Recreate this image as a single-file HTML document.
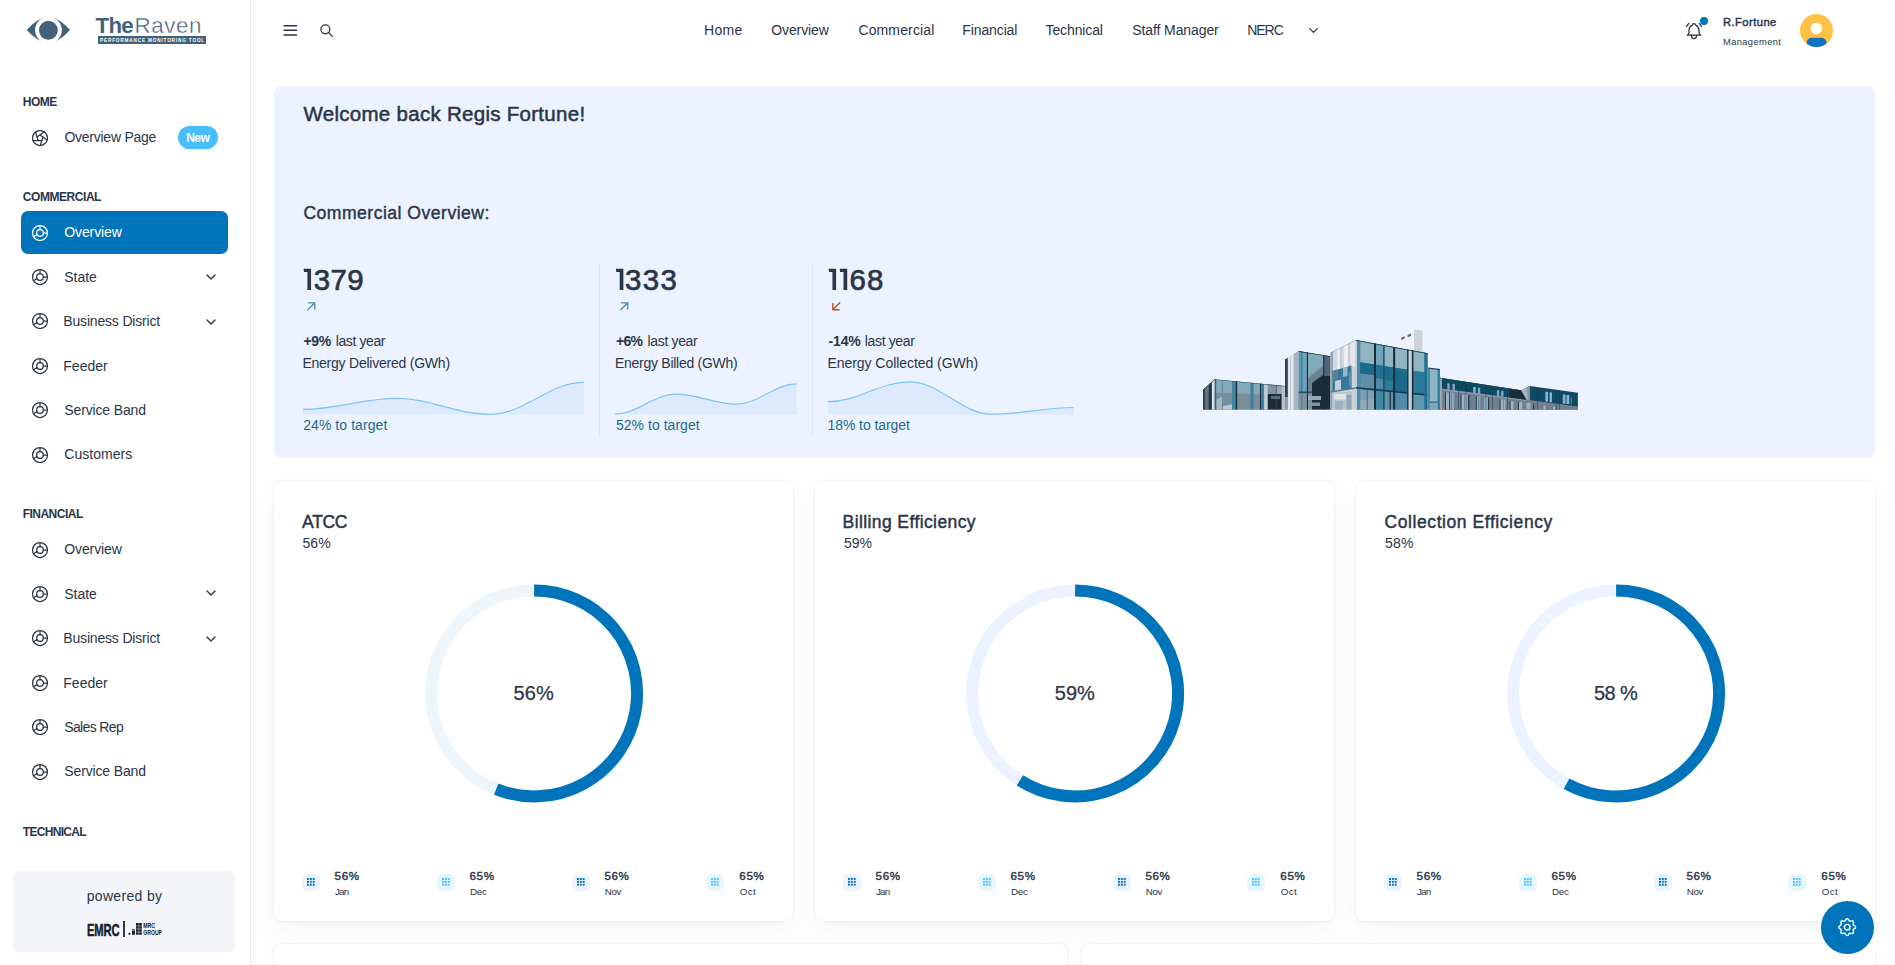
<!DOCTYPE html>
<html lang="en">
<head>
<meta charset="utf-8">
<title>The Raven - Commercial Overview</title>
<style>
*{box-sizing:border-box;margin:0;padding:0}
html,body{width:1895px;height:965px;overflow:hidden;background:#fff}
body{font-family:"Liberation Sans",sans-serif;color:#2a3547;font-size:14px;position:relative}
.abs{position:absolute}
.t{position:absolute;white-space:nowrap;line-height:1;color:#2a3547}
svg{position:absolute;overflow:visible}
#side{position:absolute;left:0;top:0;width:251px;height:965px;background:#fff;border-right:1px solid #e5eaef}
#active{position:absolute;left:21px;top:211px;width:207px;height:43px;border-radius:7px;background:#0074ba}
#banner{position:absolute;left:274px;top:86px;width:1601px;height:372px;border-radius:7px;background:#ecf2ff}
.vdiv{position:absolute;width:1px;background:#e0e6f0;top:262px;height:174px}
.card{position:absolute;background:#fff;border-radius:7px;box-shadow:0 0 2px rgba(145,158,171,.3),0 12px 24px -4px rgba(145,158,171,.12)}
.lg{position:absolute;width:18px;height:17px;border-radius:5px;background:#ecf2ff}
.lg2{background:#e8f7ff}
</style>
</head>
<body>
<svg width="0" height="0"><defs>
<symbol id="i-donut" viewBox="0 0 24 24"><g fill="none" stroke="currentColor" stroke-width="1.5" stroke-linecap="round" stroke-linejoin="round"><path d="M12 3v5m4 4h5m-12.5 2l-4.5 2.5"/><circle cx="12" cy="12" r="4"/><circle cx="12" cy="12" r="9"/></g></symbol>
<symbol id="i-aperture" viewBox="0 0 24 24"><g fill="none" stroke="currentColor" stroke-width="1.5" stroke-linecap="round" stroke-linejoin="round"><circle cx="12" cy="12" r="9"/><path d="M3.6 15h10.55"/><path d="M6.551 4.938l3.26 10.034"/><path d="M17.032 4.636l-8.535 6.201"/><path d="M20.559 14.51l-8.535 -6.201"/><path d="M12.257 20.916l3.261 -10.034"/></g></symbol>
<symbol id="i-chev" viewBox="0 0 24 24"><path d="M6 9l6 6l6 -6" fill="none" stroke="currentColor" stroke-width="2" stroke-linecap="round" stroke-linejoin="round"/></symbol>
<symbol id="i-menu" viewBox="0 0 24 24"><path d="M4 6h16M4 12h16M4 18h16" fill="none" stroke="currentColor" stroke-width="2" stroke-linecap="round"/></symbol>
<symbol id="i-search" viewBox="0 0 24 24"><g fill="none" stroke="currentColor" stroke-width="2" stroke-linecap="round" stroke-linejoin="round"><circle cx="10" cy="10" r="7"/><path d="M21 21l-6 -6"/></g></symbol>
<symbol id="i-bell" viewBox="0 0 24 24"><g fill="none" stroke="currentColor" stroke-width="1.5" stroke-linecap="round" stroke-linejoin="round"><path d="M10 5a2 2 0 0 1 4 0a7 7 0 0 1 4 6v3a4 4 0 0 0 2 3h-16a4 4 0 0 0 2 -3v-3a7 7 0 0 1 4 -6"/><path d="M9 17v1a3 3 0 0 0 6 0v-1"/><path d="M21 6.727a11.05 11.05 0 0 0 -2.794 -3.727"/><path d="M3 6.727a11.05 11.05 0 0 1 2.792 -3.727"/></g></symbol>
<symbol id="i-aur" viewBox="0 0 24 24"><path d="M17 7l-10 10M8 7h9v9" fill="none" stroke="currentColor" stroke-width="2" stroke-linecap="round" stroke-linejoin="round"/></symbol>
<symbol id="i-adl" viewBox="0 0 24 24"><path d="M17 7l-10 10M16 17h-9v-9" fill="none" stroke="currentColor" stroke-width="2" stroke-linecap="round" stroke-linejoin="round"/></symbol>
<symbol id="i-grid" viewBox="0 0 9 9"><g fill="currentColor"><rect x="0" y="0" width="2.1" height="2.1"/><rect x="3.1" y="0" width="2.1" height="2.1"/><rect x="6.2" y="0" width="2.1" height="2.1"/><rect x="0" y="3.1" width="2.1" height="2.1"/><rect x="3.1" y="3.1" width="2.1" height="2.1"/><rect x="6.2" y="3.1" width="2.1" height="2.1"/><rect x="0" y="6.2" width="2.1" height="2.1"/><rect x="3.1" y="6.2" width="2.1" height="2.1"/><rect x="6.2" y="6.2" width="2.1" height="2.1"/></g></symbol>
<symbol id="i-gear" viewBox="0 0 24 24"><g fill="none" stroke="currentColor" stroke-width="1.5" stroke-linecap="round" stroke-linejoin="round"><path d="M10.325 4.317c.426 -1.756 2.924 -1.756 3.35 0a1.724 1.724 0 0 0 2.573 1.066c1.543 -.94 3.31 .826 2.37 2.37a1.724 1.724 0 0 0 1.065 2.572c1.756 .426 1.756 2.924 0 3.35a1.724 1.724 0 0 0 -1.066 2.573c.94 1.543 -.826 3.31 -2.37 2.37a1.724 1.724 0 0 0 -2.572 1.065c-.426 1.756 -2.924 1.756 -3.35 0a1.724 1.724 0 0 0 -2.573 -1.066c-1.543 .94 -3.31 -.826 -2.37 -2.37a1.724 1.724 0 0 0 -1.065 -2.572c-1.756 -.426 -1.756 -2.924 0 -3.35a1.724 1.724 0 0 0 1.066 -2.573c-.94 -1.543 .826 -3.31 2.37 -2.37c1 .608 2.296 .07 2.572 -1.065z"/><path d="M9 12a3 3 0 1 0 6 0a3 3 0 0 0 -6 0"/></g></symbol>
</defs></svg>
<div id="side"></div>
<svg style="left:0;top:0" width="251" height="60" viewBox="0 0 251 60"><path d="M27.05 29.9Q48.4 5.4 69.7 29.9Q48.4 54.4 27.05 29.9Z" fill="#44617a" stroke="#44617a" stroke-width=".6" stroke-linejoin="round"/><circle cx="48.45" cy="30.1" r="13.35" fill="#fff"/><ellipse cx="48.4" cy="30.3" rx="9.35" ry="9.45" fill="#44617a"/></svg>
<div class="t" style="left:95.6px;top:15px;font-size:22.3px;color:#44617a"><b style="letter-spacing:-.75px">The</b><span style="letter-spacing:.62px;margin-left:1.5px;-webkit-text-stroke:.4px #fff">Raven</span></div>
<div class="abs" style="left:98px;top:36px;width:108px;height:8.2px;background:#44617a"></div>
<div class="t" style="left:100px;top:38.5px;font-size:4.7px;font-weight:700;color:#fff;letter-spacing:.83px;transform:scaleX(1.0);transform-origin:0 0">PERFORMANCE MONITORING TOOL</div>
<svg style="left:29.90px;top:127.90px;color:#2a3547" width="20" height="20"><use href="#i-aperture"/></svg>
<div class="abs" style="left:178px;top:126.2px;width:40px;height:22.5px;border-radius:12px;background:#49beff"></div>
<div id="active"></div>
<svg style="left:29.80px;top:222.60px;color:#fff" width="20" height="20"><use href="#i-donut"/></svg>
<svg style="left:29.80px;top:266.70px;color:#2a3547" width="20" height="20"><use href="#i-donut"/></svg>
<svg style="left:29.80px;top:310.70px;color:#2a3547" width="20" height="20"><use href="#i-donut"/></svg>
<svg style="left:29.80px;top:355.70px;color:#2a3547" width="20" height="20"><use href="#i-donut"/></svg>
<svg style="left:29.80px;top:399.80px;color:#2a3547" width="20" height="20"><use href="#i-donut"/></svg>
<svg style="left:29.80px;top:444.80px;color:#2a3547" width="20" height="20"><use href="#i-donut"/></svg>
<svg style="left:202.50px;top:268.60px;color:#2a3547" width="16" height="16"><use href="#i-chev"/></svg>
<svg style="left:202.50px;top:313.60px;color:#2a3547" width="16" height="16"><use href="#i-chev"/></svg>
<svg style="left:29.80px;top:539.70px;color:#2a3547" width="20" height="20"><use href="#i-donut"/></svg>
<svg style="left:29.80px;top:583.70px;color:#2a3547" width="20" height="20"><use href="#i-donut"/></svg>
<svg style="left:29.80px;top:627.60px;color:#2a3547" width="20" height="20"><use href="#i-donut"/></svg>
<svg style="left:29.80px;top:672.50px;color:#2a3547" width="20" height="20"><use href="#i-donut"/></svg>
<svg style="left:29.80px;top:716.60px;color:#2a3547" width="20" height="20"><use href="#i-donut"/></svg>
<svg style="left:29.80px;top:761.50px;color:#2a3547" width="20" height="20"><use href="#i-donut"/></svg>
<svg style="left:202.60px;top:585.40px;color:#2a3547" width="16" height="16"><use href="#i-chev"/></svg>
<svg style="left:202.60px;top:630.50px;color:#2a3547" width="16" height="16"><use href="#i-chev"/></svg>
<div class="abs" style="left:13px;top:871px;width:222px;height:80.5px;border-radius:7px;background:#f3f5f8"></div>
<div class="t" style="left:87px;top:922.3px;font-size:16.2px;font-weight:700;color:#14202b;-webkit-text-stroke:.5px #14202b;transform:scaleX(.69);transform-origin:0 0;letter-spacing:-.2px">EMRC</div>
<div class="abs" style="left:123px;top:921px;width:2px;height:15.6px;background:#2a3a48"></div>
<svg style="left:128px;top:921px" width="36" height="16" viewBox="128 921 36 16"><g fill="#14202b"><rect x="128.5" y="932.8" width="1.9" height="1.9"/><rect x="132" y="931" width="3" height="3.7"/><rect x="132" y="929.2" width="3" height="1.4" opacity=".85"/><rect x="136" y="923" width="5.8" height="11.7"/></g><g stroke="#f3f5f8" stroke-width=".45"><path d="M136 926h5.8M136 929h5.8M136 932h5.8M138.9 923v11.7"/></g><text x="143.3" y="928.4" font-family="Liberation Sans" font-weight="700" font-size="6.6" fill="#14202b" textLength="11.7" lengthAdjust="spacingAndGlyphs">MRC</text><text x="143.3" y="935" font-family="Liberation Sans" font-weight="700" font-size="6.6" fill="#14202b" textLength="18.7" lengthAdjust="spacingAndGlyphs">GROUP</text></svg>
<svg style="left:280.85px;top:20.95px;color:#2a3547" width="18.7" height="18.7"><use href="#i-menu"/></svg>
<svg style="left:318.85px;top:22.95px;color:#2a3547" width="15.3" height="15.3"><use href="#i-search"/></svg>
<svg style="left:1305.50px;top:22.90px;color:#2a3547" width="15" height="15"><use href="#i-chev"/></svg>
<svg style="left:1684.00px;top:20.60px;color:#2a3547" width="20" height="20"><use href="#i-bell"/></svg>
<div class="abs" style="left:1699.8px;top:16.8px;width:8.2px;height:8.2px;border-radius:50%;background:#0074ba"></div>
<svg style="left:1800px;top:14px" width="33" height="33" viewBox="0 0 33 33"><defs><clipPath id="avc"><circle cx="16.5" cy="16.5" r="16.5"/></clipPath></defs><circle cx="16.5" cy="16.5" r="16.5" fill="#ffc145"/><circle cx="16.4" cy="14.4" r="5.75" fill="#fff"/><path d="M6.7 33V29.2Q6.7 23.7 12.2 23.7H20.9Q26.4 23.7 26.4 29.2V33Z" fill="#0d74c4" clip-path="url(#avc)"/></svg>
<div id="banner"></div>
<div class="vdiv" style="left:599px"></div><div class="vdiv" style="left:812px"></div>
<svg style="left:303.25px;top:298.00px;color:#4b90b8" width="16.6" height="16.6"><use href="#i-aur"/></svg>
<svg style="left:615.60px;top:298.00px;color:#4b90b8" width="16.6" height="16.6"><use href="#i-aur"/></svg>
<svg style="left:828.10px;top:298.00px;color:#b5532a" width="16.6" height="16.6"><use href="#i-adl"/></svg>
<svg style="left:0;top:0" width="1895" height="965" viewBox="0 0 1895 965"><path d="M303.2 409.3C337.8 409.3 362.1 398.3 396.7 398.3C431.3 398.3 455.6 414.3 490.2 414.3C524.8 414.3 549.1 382.3 583.7 382.3L583.7 414.6L303.2 414.6Z" fill="#ddeafe"/><path d="M303.2 409.3C337.8 409.3 362.1 398.3 396.7 398.3C431.3 398.3 455.6 414.3 490.2 414.3C524.8 414.3 549.1 382.3 583.7 382.3" fill="none" stroke="#7cc5f7" stroke-width="1.2"/><path d="M615.1 414.2C637.5 414.2 653.2 394.1 675.6 394.1C698.0 394.1 713.8 404.2 736.2 404.2C758.6 404.2 774.3 383.9 796.7 383.9L796.7 414.6L615.1 414.6Z" fill="#ddeafe"/><path d="M615.1 414.2C637.5 414.2 653.2 394.1 675.6 394.1C698.0 394.1 713.8 404.2 736.2 404.2C758.6 404.2 774.3 383.9 796.7 383.9" fill="none" stroke="#7cc5f7" stroke-width="1.2"/><path d="M827.9 401.7C858.2 401.7 879.5 381.9 909.8 381.9C940.1 381.9 961.4 414.2 991.7 414.2C1022.0 414.2 1043.3 407.5 1073.6 407.5L1073.6 414.6L827.9 414.6Z" fill="#ddeafe"/><path d="M827.9 401.7C858.2 401.7 879.5 381.9 909.8 381.9C940.1 381.9 961.4 414.2 991.7 414.2C1022.0 414.2 1043.3 407.5 1073.6 407.5" fill="none" stroke="#7cc5f7" stroke-width="1.2"/><path d="M303.60 268.86H311.05V290.05H307.40V271.9H303.95Z" fill="#2a3547"/><path d="M615.90 268.86H623.35V290.05H619.70V271.9H616.25Z" fill="#2a3547"/><path d="M828.65 268.86H836.10V290.05H832.45V271.9H829.00Z" fill="#2a3547"/><path d="M839.75 268.86H847.20V290.05H843.55V271.9H840.10Z" fill="#2a3547"/><g shape-rendering="auto"><defs><clipPath id="cL"><polygon points="1203,409.7 1203,389.7 1214.5,379.3 1285,386 1285,409.7"/></clipPath><clipPath id="cM2"><polygon points="1298.4,409.7 1298.4,351.1 1332.2,356.4 1332.2,409.7"/></clipPath><clipPath id="cT1"><polygon points="1330.3,409.7 1330.3,352.7 1355.9,340 1355.9,409.7"/></clipPath><clipPath id="cT2"><polygon points="1355.9,409.7 1355.9,340 1427.7,353.2 1427.7,409.7"/></clipPath><clipPath id="cR"><polygon points="1440,377.8 1521.1,390.2 1529.6,386 1577.9,392.8 1577.9,409.7 1440,409.7"/></clipPath></defs><g clip-path="url(#cL)"><rect x="1203.0" y="375.0" width="82.0" height="34.7" fill="#86a9b9"/><polygon points="1203.0,392.0 1285.0,395.5 1285.0,409.7 1203.0,409.7" fill="#7a8d9b"/><rect x="1203.0" y="375.0" width="2.2" height="34.7" fill="#2b3f50"/><rect x="1205.2" y="375.0" width="3.5" height="34.7" fill="#5d7384"/><rect x="1208.7" y="375.0" width="3.2" height="34.7" fill="#1f3040"/><rect x="1211.9" y="375.0" width="2.8" height="34.7" fill="#dde1e6"/><rect x="1214.7" y="375.0" width="1.5" height="34.7" fill="#1d6f8f"/><rect x="1232.0" y="375.0" width="3.6" height="34.7" fill="#3f86a3"/><rect x="1235.6" y="375.0" width="1.6" height="34.7" fill="#1f3040"/><rect x="1250.4" y="375.0" width="3.2" height="34.7" fill="#3b82a0"/><rect x="1259.9" y="375.0" width="1.6" height="34.7" fill="#1f3040"/><rect x="1261.5" y="375.0" width="2.6" height="34.7" fill="#3b82a0"/><rect x="1264.1" y="375.0" width="3.7" height="34.7" fill="#c5ccd4"/><rect x="1281.5" y="375.0" width="3.5" height="34.7" fill="#b8c1ca"/><rect x="1222.0" y="375.0" width="0.9" height="34.7" fill="#5f8da2"/><rect x="1267.8" y="375.0" width="8.5" height="19.0" fill="#8394a3"/><rect x="1267.8" y="394.0" width="13.7" height="15.7" fill="#1c2b38"/><rect x="1276.3" y="375.0" width="5.2" height="19.0" fill="#97a5b0"/><rect x="1275.8" y="375.0" width="0.8" height="34.7" fill="#3a4a58"/><rect x="1271.0" y="396.0" width="9.0" height="3.0" fill="#5a6b7a"/><polygon points="1216.5,400.0 1222.0,396.5 1222.0,409.7 1216.5,409.7" fill="#a8b6c0"/><polygon points="1223.0,406.0 1232.0,404.5 1232.0,409.7 1223.0,409.7" fill="#b9c9d2"/><path d="M1203 389.7L1214.5 379.3L1285 386" fill="none" stroke="#24465a" stroke-width="1.1"/></g><polygon points="1285.0,409.7 1285.0,359.5 1298.4,351.1 1298.4,409.7" fill="#cdd3da"/><polygon points="1285.0,397.0 1285.0,359.5 1287.9,357.7 1287.9,397.0" fill="#2f4050"/><polygon points="1287.9,409.7 1287.9,357.7 1293.7,354.0 1293.7,409.7" fill="#e4e7eb"/><polygon points="1293.7,409.7 1293.7,354.0 1298.4,351.1 1298.4,409.7" fill="#a9b4be"/><rect x="1285.0" y="397.0" width="2.9" height="12.7" fill="#8f9ca8"/><rect x="1290.3" y="356.0" width="0.7" height="53.7" fill="#b4bdc6"/><g clip-path="url(#cM2)"><rect x="1298.4" y="350.0" width="33.8" height="59.7" fill="#83aaba"/><rect x="1298.4" y="350.0" width="8.5" height="59.7" fill="#5a97b0"/><rect x="1303.0" y="350.0" width="3.9" height="43.0" fill="#6fa3b8"/><polygon points="1308.0,378.0 1323.0,366.0 1323.0,392.0 1308.0,392.0" fill="#6c8293"/><polygon points="1312.0,383.0 1323.0,375.0 1332.2,375.0 1332.2,409.7 1312.0,409.7" fill="#1c2b38"/><rect x="1323.2" y="356.0" width="9.0" height="20.0" fill="#4d6577"/><rect x="1298.4" y="393.0" width="13.6" height="16.7" fill="#7c93a2"/><rect x="1308.0" y="396.0" width="13.0" height="4.0" fill="#9aa8b4"/><rect x="1308.0" y="402.5" width="12.0" height="3.5" fill="#8695a2"/><rect x="1298.4" y="391.5" width="13.6" height="1.7" fill="#27506a"/><rect x="1306.9" y="350.0" width="1.1" height="59.7" fill="#1c2b38"/><rect x="1323.2" y="350.0" width="1.1" height="59.7" fill="#1c2b38"/><rect x="1301.5" y="350.0" width="0.7" height="59.7" fill="#2f6f8c"/><path d="M1298.4 351.1L1332.2 356.4" fill="none" stroke="#1c2b38" stroke-width="1.3"/></g><g clip-path="url(#cT1)"><rect x="1330.0" y="338.0" width="26.0" height="71.7" fill="#d3d9e0"/><rect x="1330.3" y="338.0" width="2.7" height="71.7" fill="#8fa5b4"/><rect x="1337.0" y="338.0" width="3.5" height="34.0" fill="#e9ecef"/><rect x="1344.0" y="338.0" width="4.5" height="32.0" fill="#eef0f3"/><rect x="1350.5" y="338.0" width="4.0" height="30.0" fill="#e4e8ec"/><rect x="1340.5" y="345.0" width="0.8" height="64.7" fill="#aab6c1"/><rect x="1348.5" y="342.0" width="0.8" height="67.7" fill="#aab6c1"/><polygon points="1332.5,371.0 1351.5,365.5 1351.5,388.5 1332.5,392.0" fill="#34789a"/><polygon points="1333.0,371.0 1338.0,369.5 1338.0,380.0 1333.0,381.0" fill="#5a7d92"/><polygon points="1335.0,381.0 1341.0,379.5 1341.0,391.0 1335.0,392.0" fill="#c5cfd8"/><polygon points="1343.0,367.8 1347.5,366.6 1347.5,376.0 1343.0,377.0" fill="#9fb6c4"/><polygon points="1349.0,372.0 1351.5,371.5 1351.5,386.0 1349.0,386.5" fill="#5f8fa8"/><rect x="1352.0" y="366.0" width="3.9" height="43.7" fill="#c9d1d9"/><rect x="1332.0" y="392.0" width="20.0" height="17.7" fill="#b9c5cf"/><rect x="1334.0" y="394.0" width="12.0" height="5.5" fill="#e1e5ea"/><rect x="1335.0" y="401.0" width="8.0" height="8.7" fill="#9fb0be"/><rect x="1346.5" y="395.0" width="5.0" height="14.7" fill="#8fa8b8"/><polygon points="1330.3,391.3 1355.9,387.2 1355.9,388.7 1330.3,392.8" fill="#5f7b8d"/><path d="M1330.3 352.7L1355.9 340" fill="none" stroke="#8294a2" stroke-width="1"/></g><polygon points="1399.2,335.8 1414.0,329.5 1414.0,352.0 1399.2,352.0" fill="#eef0f4"/><polygon points="1414.0,329.5 1422.5,330.6 1422.5,354.0 1414.0,354.0" fill="#cdd1d8"/><polygon points="1401.3,337.6 1404.6,336.3 1404.6,338.6 1401.3,339.9" fill="#56657a"/><polygon points="1407.6,335.0 1411.0,333.6 1411.0,335.9 1407.6,337.3" fill="#56657a"/><g clip-path="url(#cT2)"><rect x="1355.9" y="338.0" width="71.8" height="71.7" fill="#2a7696"/><polygon points="1360.1,338.0 1374.1,338.0 1374.1,364.5 1360.1,362.3" fill="#8fb4c2"/><polygon points="1360.1,362.3 1374.1,364.5 1374.1,388.9 1360.1,387.4" fill="#1a6a8c"/><polygon points="1360.1,388.9 1374.1,390.4 1374.1,409.7 1360.1,409.7" fill="#7d9db0"/><polygon points="1376.0,338.0 1383.4,338.0 1383.4,366.0 1376.0,364.8" fill="#6fa3b8"/><polygon points="1376.0,364.8 1383.4,366.0 1383.4,389.8 1376.0,389.0" fill="#1f7092"/><polygon points="1376.0,390.5 1383.4,391.3 1383.4,409.7 1376.0,409.7" fill="#3f86a3"/><polygon points="1384.4,338.0 1393.2,338.0 1393.2,367.5 1384.4,366.2" fill="#8fb4c2"/><polygon points="1384.4,366.2 1393.2,367.5 1393.2,390.8 1384.4,389.9" fill="#1a6a8c"/><polygon points="1384.4,391.4 1393.2,392.3 1393.2,409.7 1384.4,409.7" fill="#5b93ab"/><polygon points="1395.1,338.0 1407.2,338.0 1407.2,369.8 1395.1,367.8" fill="#8fb4c2"/><polygon points="1395.1,367.8 1407.2,369.8 1407.2,392.2 1395.1,391.0" fill="#1a6a8c"/><polygon points="1395.1,392.5 1407.2,393.7 1407.2,409.7 1395.1,409.7" fill="#4f8ba6"/><polygon points="1413.3,338.0 1424.5,338.0 1424.5,372.5 1413.3,370.7" fill="#8fb4c2"/><polygon points="1413.3,370.7 1424.5,372.5 1424.5,394.0 1413.3,392.8" fill="#2b7898"/><polygon points="1413.3,394.3 1424.5,395.5 1424.5,409.7 1413.3,409.7" fill="#5f97b0"/><polygon points="1360.1,373.5 1374.1,375.0 1374.1,388.9 1360.1,387.4" fill="#5f8fa8"/><polygon points="1376.0,378.0 1383.4,379.0 1383.4,389.8 1376.0,389.0" fill="#4a88a4"/><polygon points="1384.4,380.0 1393.2,381.0 1393.2,390.8 1384.4,389.9" fill="#2f7a9a"/><polygon points="1360.1,400.0 1374.1,399.0 1374.1,409.7 1360.1,409.7" fill="#8ea9b8"/><rect x="1355.9" y="338.0" width="4.2" height="71.7" fill="#4a8ca7"/><rect x="1355.9" y="338.0" width="1.1" height="71.7" fill="#c3ccd5"/><polygon points="1355.9,387.0 1427.7,394.3 1427.7,395.8 1355.9,388.5" fill="#143a50"/><rect x="1374.1" y="338.0" width="1.9" height="71.7" fill="#1c2b38"/><rect x="1383.4" y="338.0" width="1.0" height="71.7" fill="#173f55"/><rect x="1393.2" y="338.0" width="1.9" height="71.7" fill="#1c2b38"/><rect x="1407.2" y="338.0" width="1.4" height="71.7" fill="#1c2b38"/><rect x="1408.6" y="338.0" width="3.3" height="71.7" fill="#c9d0d8"/><rect x="1411.9" y="338.0" width="1.4" height="71.7" fill="#1c2b38"/><rect x="1424.5" y="338.0" width="3.2" height="71.7" fill="#1f6f90"/><rect x="1366.8" y="389.0" width="0.8" height="20.7" fill="#3a5a6c"/><rect x="1389.6" y="391.0" width="1.2" height="18.7" fill="#1c2b38"/><path d="M1355.9 340L1427.7 353.2" fill="none" stroke="#15384c" stroke-width="1.5"/></g><polygon points="1428.3,409.7 1428.3,368.0 1439.9,369.6 1439.9,409.7" fill="#8db4c3"/><polygon points="1428.3,409.7 1428.3,368.0 1429.6,368.2 1429.6,409.7" fill="#1f6f90"/><polygon points="1437.6,409.7 1437.6,369.3 1439.9,369.6 1439.9,409.7" fill="#2b7b9b"/><path d="M1428.3 368L1439.9 369.6" fill="none" stroke="#15384c" stroke-width="1.2"/><rect x="1429.6" y="401.5" width="8.0" height="1.3" fill="#1f6f90"/><rect x="1429.6" y="402.8" width="8.0" height="6.9" fill="#7fa6b8"/><g clip-path="url(#cR)"><rect x="1440.0" y="376.0" width="138.0" height="33.7" fill="#0f4a63"/><polygon points="1440.0,388.6 1526.4,399.7 1577.9,406.5 1577.9,409.7 1440.0,409.7" fill="#717f8d"/><polygon points="1440.0,388.6 1526.4,399.7 1526.4,401.0 1440.0,390.0" fill="#8f9aa6"/><polygon points="1509.5,388.4 1521.1,390.2 1527.0,399.8 1509.5,397.5" fill="#1c2b38"/><polygon points="1521.1,390.2 1529.6,386.0 1529.6,400.2 1526.6,399.8" fill="#aeb6bf"/><polygon points="1526.0,388.0 1529.6,386.0 1529.6,400.2 1528.0,400.0" fill="#8e99a5"/><rect x="1440.0" y="377.0" width="2.0" height="32.7" fill="#9aa7b3"/><rect x="1447.3" y="383.3" width="2.3" height="6.4" fill="#7fa9c9"/><rect x="1452.5" y="384.0" width="2.4" height="6.4" fill="#7fa9c9"/><rect x="1473.1" y="387.0" width="2.7" height="6.3" fill="#7fa9c9"/><rect x="1477.9" y="387.7" width="2.3" height="6.3" fill="#7fa9c9"/><rect x="1496.9" y="390.2" width="2.3" height="5.8" fill="#7fa9c9"/><rect x="1501.1" y="390.8" width="2.3" height="5.8" fill="#7fa9c9"/><rect x="1545.4" y="391.8" width="2.6" height="9.8" fill="#8ab4d6"/><rect x="1549.6" y="392.4" width="2.4" height="9.8" fill="#8ab4d6"/><rect x="1562.8" y="394.4" width="2.7" height="9.2" fill="#8ab4d6"/><rect x="1566.5" y="395.0" width="2.7" height="9.0" fill="#8ab4d6"/><rect x="1570.8" y="397.0" width="1.2" height="7.5" fill="#3f7f9c"/><rect x="1458.0" y="376.0" width="0.7" height="33.7" fill="#0a3a50" opacity=".7"/><rect x="1465.5" y="376.0" width="0.7" height="33.7" fill="#0a3a50" opacity=".7"/><rect x="1485.5" y="376.0" width="0.7" height="33.7" fill="#0a3a50" opacity=".7"/><rect x="1492.0" y="376.0" width="0.7" height="33.7" fill="#0a3a50" opacity=".7"/><rect x="1507.0" y="376.0" width="0.7" height="33.7" fill="#0a3a50" opacity=".7"/><rect x="1537.0" y="376.0" width="0.7" height="33.7" fill="#0a3a50" opacity=".7"/><rect x="1556.0" y="376.0" width="0.7" height="33.7" fill="#0a3a50" opacity=".7"/><rect x="1559.0" y="376.0" width="0.7" height="33.7" fill="#0a3a50" opacity=".7"/><rect x="1446.0" y="392.5" width="3.0" height="17.2" fill="#9fb1c1"/><rect x="1449.8" y="392.8" width="4.0" height="16.9" fill="#9fb1c1"/><rect x="1461.5" y="394.5" width="2.5" height="15.2" fill="#9fb1c1"/><rect x="1464.8" y="394.8" width="3.0" height="14.9" fill="#9fb1c1"/><rect x="1476.8" y="396.5" width="3.4" height="13.2" fill="#9fb1c1"/><rect x="1484.2" y="397.5" width="3.6" height="12.2" fill="#9fb1c1"/><rect x="1500.5" y="399.5" width="2.5" height="10.2" fill="#9fb1c1"/><rect x="1503.8" y="399.8" width="1.7" height="9.9" fill="#9fb1c1"/><rect x="1510.5" y="401.0" width="3.0" height="8.7" fill="#9fb1c1"/><rect x="1519.0" y="402.0" width="3.2" height="7.7" fill="#9fb1c1"/><rect x="1526.4" y="402.8" width="4.1" height="6.9" fill="#9fb1c1"/><rect x="1543.5" y="405.5" width="2.0" height="4.2" fill="#9fb1c1"/><rect x="1553.0" y="406.5" width="2.0" height="3.2" fill="#9fb1c1"/><rect x="1445.0" y="392.3" width="1.0" height="17.4" fill="#2b3c4b"/><rect x="1449.0" y="392.6" width="0.8" height="17.1" fill="#2b3c4b"/><rect x="1460.5" y="394.3" width="1.0" height="15.4" fill="#2b3c4b"/><rect x="1468.0" y="395.0" width="1.5" height="14.7" fill="#2b3c4b"/><rect x="1475.8" y="396.3" width="1.0" height="13.4" fill="#2b3c4b"/><rect x="1488.0" y="397.6" width="1.2" height="12.1" fill="#2b3c4b"/><rect x="1499.5" y="399.3" width="1.0" height="10.4" fill="#2b3c4b"/><rect x="1509.5" y="400.8" width="1.0" height="8.9" fill="#2b3c4b"/><rect x="1518.0" y="401.8" width="1.0" height="7.9" fill="#2b3c4b"/><rect x="1533.0" y="403.6" width="1.2" height="6.1" fill="#2b3c4b"/><rect x="1450.6" y="393.2" width="1.6" height="16.5" fill="#4f8fb0"/><rect x="1465.4" y="395.2" width="1.4" height="14.5" fill="#4f8fb0"/><rect x="1478.0" y="397.0" width="1.4" height="12.7" fill="#4f8fb0"/><rect x="1485.3" y="398.0" width="1.3" height="11.7" fill="#4f8fb0"/><path d="M1440 377.8L1521.1 390.2" fill="none" stroke="#0c3c52" stroke-width="1"/></g></g></svg>
<div class="card" style="left:274px;top:480.5px;width:518.5px;height:440.5px"></div>
<div class="card" style="left:815px;top:480.5px;width:518.5px;height:440.5px"></div>
<div class="card" style="left:1356px;top:480.5px;width:518.5px;height:440.5px"></div>
<div class="card" style="left:274px;top:943.5px;width:793px;height:60px"></div>
<div class="card" style="left:1082px;top:943.5px;width:793px;height:60px"></div>
<svg style="left:0;top:0" width="1895" height="965" viewBox="0 0 1895 965"><circle cx="534.1" cy="693.4" r="103" fill="none" stroke="#eff6fb" stroke-width="12"/><path d="M534.1 590.4A103 103 0 1 1 496.18 789.17" fill="none" stroke="#0074ba" stroke-width="12"/><circle cx="1075.1" cy="693.4" r="103" fill="none" stroke="#ecf2ff" stroke-width="12"/><path d="M1075.1 590.4A103 103 0 1 1 1019.91 780.37" fill="none" stroke="#0074ba" stroke-width="12"/><circle cx="1616.1" cy="693.4" r="103" fill="none" stroke="#ecf2ff" stroke-width="12"/><path d="M1616.1 590.4A103 103 0 1 1 1566.48 783.66" fill="none" stroke="#0074ba" stroke-width="12"/></svg>
<div class="lg" style="left:302.0px;top:874px"></div><svg style="left:307.0px;top:878px;color:#0074ba" width="8.3" height="8.3"><use href="#i-grid"/></svg>
<div class="lg lg2" style="left:436.8px;top:874px"></div><svg style="left:441.8px;top:878px;color:#49beff" width="8.3" height="8.3"><use href="#i-grid"/></svg>
<div class="lg" style="left:571.6px;top:874px"></div><svg style="left:576.6px;top:878px;color:#0074ba" width="8.3" height="8.3"><use href="#i-grid"/></svg>
<div class="lg lg2" style="left:706.4px;top:874px"></div><svg style="left:711.4px;top:878px;color:#49beff" width="8.3" height="8.3"><use href="#i-grid"/></svg>
<div class="lg" style="left:843.0px;top:874px"></div><svg style="left:848.0px;top:878px;color:#0074ba" width="8.3" height="8.3"><use href="#i-grid"/></svg>
<div class="lg lg2" style="left:977.8px;top:874px"></div><svg style="left:982.8px;top:878px;color:#49beff" width="8.3" height="8.3"><use href="#i-grid"/></svg>
<div class="lg" style="left:1112.6px;top:874px"></div><svg style="left:1117.6px;top:878px;color:#0074ba" width="8.3" height="8.3"><use href="#i-grid"/></svg>
<div class="lg lg2" style="left:1247.4px;top:874px"></div><svg style="left:1252.4px;top:878px;color:#49beff" width="8.3" height="8.3"><use href="#i-grid"/></svg>
<div class="lg" style="left:1384.0px;top:874px"></div><svg style="left:1389.0px;top:878px;color:#0074ba" width="8.3" height="8.3"><use href="#i-grid"/></svg>
<div class="lg lg2" style="left:1518.8px;top:874px"></div><svg style="left:1523.8px;top:878px;color:#49beff" width="8.3" height="8.3"><use href="#i-grid"/></svg>
<div class="lg" style="left:1653.6px;top:874px"></div><svg style="left:1658.6px;top:878px;color:#0074ba" width="8.3" height="8.3"><use href="#i-grid"/></svg>
<div class="lg lg2" style="left:1788.4px;top:874px"></div><svg style="left:1793.4px;top:878px;color:#49beff" width="8.3" height="8.3"><use href="#i-grid"/></svg>
<div class="abs" style="left:1821.3px;top:901px;width:52.6px;height:52.6px;border-radius:50%;background:#0074ba"></div>
<svg style="left:1836.40px;top:916.40px;color:#fff" width="22.4" height="22.4"><use href="#i-gear"/></svg>

<!-- TEXT -->
<div class="t" style="left:22.85px;top:95.90px;font-size:12px;font-weight:700;letter-spacing:-0.549px;">HOME</div>
<div class="t" style="left:64.40px;top:130.00px;font-size:14px;letter-spacing:-0.245px;">Overview Page</div>
<div class="t" style="left:186.20px;top:132.00px;font-size:12px;font-weight:700;color:#fff;letter-spacing:-0.570px;">New</div>
<div class="t" style="left:22.85px;top:190.90px;font-size:12px;font-weight:700;letter-spacing:-0.453px;">COMMERCIAL</div>
<div class="t" style="left:22.70px;top:508.10px;font-size:12px;font-weight:700;letter-spacing:-0.516px;">FINANCIAL</div>
<div class="t" style="left:22.80px;top:825.50px;font-size:12px;font-weight:700;letter-spacing:-0.687px;">TECHNICAL</div>
<div class="t" style="left:64.30px;top:225.00px;font-size:14px;color:#fff;letter-spacing:-0.119px;">Overview</div>
<div class="t" style="left:64.30px;top:270.00px;font-size:14px;letter-spacing:-0.051px;">State</div>
<div class="t" style="left:63.30px;top:314.00px;font-size:14px;letter-spacing:-0.179px;">Business Disrict</div>
<div class="t" style="left:63.30px;top:359.00px;font-size:14px;letter-spacing:0.021px;">Feeder</div>
<div class="t" style="left:64.30px;top:403.00px;font-size:14px;letter-spacing:-0.144px;">Service Band</div>
<div class="t" style="left:64.30px;top:447.00px;font-size:14px;letter-spacing:0.027px;">Customers</div>
<div class="t" style="left:64.30px;top:542.00px;font-size:14px;letter-spacing:-0.119px;">Overview</div>
<div class="t" style="left:64.30px;top:587.00px;font-size:14px;letter-spacing:-0.051px;">State</div>
<div class="t" style="left:63.30px;top:631.00px;font-size:14px;letter-spacing:-0.179px;">Business Disrict</div>
<div class="t" style="left:63.30px;top:676.00px;font-size:14px;letter-spacing:0.021px;">Feeder</div>
<div class="t" style="left:64.30px;top:720.00px;font-size:14px;letter-spacing:-0.651px;">Sales Rep</div>
<div class="t" style="left:64.30px;top:764.00px;font-size:14px;letter-spacing:-0.144px;">Service Band</div>
<div class="t" style="left:86.70px;top:888.80px;font-size:14px;letter-spacing:0.325px;">powered by</div>
<div class="t" style="left:704.00px;top:23.00px;font-size:14px;letter-spacing:0.314px;">Home</div>
<div class="t" style="left:771.20px;top:23.00px;font-size:14px;letter-spacing:-0.091px;">Overview</div>
<div class="t" style="left:858.40px;top:23.00px;font-size:14px;letter-spacing:0.137px;">Commercial</div>
<div class="t" style="left:962.30px;top:23.00px;font-size:14px;letter-spacing:-0.115px;">Financial</div>
<div class="t" style="left:1045.60px;top:23.00px;font-size:14px;letter-spacing:-0.132px;">Technical</div>
<div class="t" style="left:1132.30px;top:23.00px;font-size:14px;letter-spacing:-0.102px;">Staff Manager</div>
<div class="t" style="left:1247.20px;top:23.00px;font-size:14px;letter-spacing:-1.020px;">NERC</div>
<div class="t" style="left:1723.00px;top:16.80px;font-size:11.2px;letter-spacing:0.447px;-webkit-text-stroke:.45px #2a3547;">R.Fortune</div>
<div class="t" style="left:1723.00px;top:37.50px;font-size:9.3px;letter-spacing:0.402px;">Management</div>
<div class="t" style="left:303.50px;top:103.90px;font-size:20.5px;letter-spacing:0.284px;-webkit-text-stroke:.5px #2a3547;">Welcome back Regis Fortune!</div>
<div class="t" style="left:303.40px;top:205.10px;font-size:17.6px;letter-spacing:0.476px;-webkit-text-stroke:.4px #2a3547;">Commercial Overview:</div>
<div class="t" style="left:313.80px;top:265.05px;font-size:29.4px;letter-spacing:0.404px;-webkit-text-stroke:.7px #2a3547;">379</div>
<div class="t" style="left:625.10px;top:265.05px;font-size:29.4px;letter-spacing:1.354px;-webkit-text-stroke:.7px #2a3547;">333</div>
<div class="t" style="left:849.60px;top:265.05px;font-size:29.4px;letter-spacing:1.154px;-webkit-text-stroke:.7px #2a3547;">68</div>
<div class="t" style="left:303.40px;top:334.00px;font-size:14px;font-weight:700;letter-spacing:-0.331px;">+9%</div>
<div class="t" style="left:335.70px;top:334.00px;font-size:14px;letter-spacing:-0.394px;">last year</div>
<div class="t" style="left:616.00px;top:334.00px;font-size:14px;font-weight:700;letter-spacing:-0.681px;">+6%</div>
<div class="t" style="left:647.60px;top:334.00px;font-size:14px;letter-spacing:-0.356px;">last year</div>
<div class="t" style="left:828.50px;top:334.00px;font-size:14px;font-weight:700;letter-spacing:-0.145px;">-14%</div>
<div class="t" style="left:864.80px;top:334.00px;font-size:14px;letter-spacing:-0.356px;">last year</div>
<div class="t" style="left:302.40px;top:356.10px;font-size:14px;letter-spacing:-0.230px;">Energy Delivered (GWh)</div>
<div class="t" style="left:615.00px;top:356.10px;font-size:14px;letter-spacing:-0.274px;">Energy Billed (GWh)</div>
<div class="t" style="left:827.50px;top:356.10px;font-size:14px;letter-spacing:-0.055px;">Energy Collected (GWh)</div>
<div class="t" style="left:303.20px;top:418.20px;font-size:14px;color:#216c8c;letter-spacing:0.068px;">24% to target</div>
<div class="t" style="left:616.00px;top:418.20px;font-size:14px;color:#216c8c;letter-spacing:0.026px;">52% to target</div>
<div class="t" style="left:827.50px;top:418.20px;font-size:14px;color:#216c8c;letter-spacing:-0.074px;">18% to target</div>
<div class="t" style="left:302.10px;top:514.00px;font-size:17.5px;letter-spacing:-0.334px;-webkit-text-stroke:.45px #2a3547;">ATCC</div>
<div class="t" style="left:302.50px;top:535.80px;font-size:14px;letter-spacing:0.064px;">56%</div>
<div class="t" style="left:513.50px;top:683.00px;font-size:20px;letter-spacing:0.127px;-webkit-text-stroke:.25px #2a3547;">56%</div>
<div class="t" style="left:334.60px;top:870.00px;font-size:11.6px;letter-spacing:0.652px;-webkit-text-stroke:.4px #2a3547;">56%</div>
<div class="t" style="left:335.00px;top:886.90px;font-size:9.8px;letter-spacing:-0.824px;">Jan</div>
<div class="t" style="left:469.50px;top:870.00px;font-size:11.6px;letter-spacing:0.652px;-webkit-text-stroke:.4px #2a3547;">65%</div>
<div class="t" style="left:469.90px;top:886.90px;font-size:9.8px;letter-spacing:-0.212px;">Dec</div>
<div class="t" style="left:604.40px;top:870.00px;font-size:11.6px;letter-spacing:0.652px;-webkit-text-stroke:.4px #2a3547;">56%</div>
<div class="t" style="left:604.80px;top:886.90px;font-size:9.8px;letter-spacing:-0.362px;">Nov</div>
<div class="t" style="left:739.30px;top:870.00px;font-size:11.6px;letter-spacing:0.652px;-webkit-text-stroke:.4px #2a3547;">65%</div>
<div class="t" style="left:739.70px;top:886.90px;font-size:9.8px;letter-spacing:0.441px;">Oct</div>
<div class="t" style="left:842.60px;top:514.00px;font-size:17.5px;letter-spacing:0.402px;-webkit-text-stroke:.45px #2a3547;">Billing Efficiency</div>
<div class="t" style="left:844.00px;top:535.80px;font-size:14px;letter-spacing:-0.036px;">59%</div>
<div class="t" style="left:1054.80px;top:683.00px;font-size:20px;letter-spacing:0.027px;-webkit-text-stroke:.25px #2a3547;">59%</div>
<div class="t" style="left:875.60px;top:870.00px;font-size:11.6px;letter-spacing:0.652px;-webkit-text-stroke:.4px #2a3547;">56%</div>
<div class="t" style="left:876.00px;top:886.90px;font-size:9.8px;letter-spacing:-0.824px;">Jan</div>
<div class="t" style="left:1010.50px;top:870.00px;font-size:11.6px;letter-spacing:0.652px;-webkit-text-stroke:.4px #2a3547;">65%</div>
<div class="t" style="left:1010.90px;top:886.90px;font-size:9.8px;letter-spacing:-0.212px;">Dec</div>
<div class="t" style="left:1145.40px;top:870.00px;font-size:11.6px;letter-spacing:0.652px;-webkit-text-stroke:.4px #2a3547;">56%</div>
<div class="t" style="left:1145.80px;top:886.90px;font-size:9.8px;letter-spacing:-0.362px;">Nov</div>
<div class="t" style="left:1280.30px;top:870.00px;font-size:11.6px;letter-spacing:0.652px;-webkit-text-stroke:.4px #2a3547;">65%</div>
<div class="t" style="left:1280.70px;top:886.90px;font-size:9.8px;letter-spacing:0.441px;">Oct</div>
<div class="t" style="left:1384.60px;top:514.00px;font-size:17.5px;letter-spacing:0.569px;-webkit-text-stroke:.45px #2a3547;">Collection Efficiency</div>
<div class="t" style="left:1385.00px;top:535.80px;font-size:14px;letter-spacing:0.164px;">58%</div>
<div class="t" style="left:1594.10px;top:683.00px;font-size:20px;letter-spacing:-0.668px;-webkit-text-stroke:.25px #2a3547;">58 %</div>
<div class="t" style="left:1416.60px;top:870.00px;font-size:11.6px;letter-spacing:0.652px;-webkit-text-stroke:.4px #2a3547;">56%</div>
<div class="t" style="left:1417.00px;top:886.90px;font-size:9.8px;letter-spacing:-0.824px;">Jan</div>
<div class="t" style="left:1551.50px;top:870.00px;font-size:11.6px;letter-spacing:0.652px;-webkit-text-stroke:.4px #2a3547;">65%</div>
<div class="t" style="left:1551.90px;top:886.90px;font-size:9.8px;letter-spacing:-0.212px;">Dec</div>
<div class="t" style="left:1686.40px;top:870.00px;font-size:11.6px;letter-spacing:0.652px;-webkit-text-stroke:.4px #2a3547;">56%</div>
<div class="t" style="left:1686.80px;top:886.90px;font-size:9.8px;letter-spacing:-0.362px;">Nov</div>
<div class="t" style="left:1821.30px;top:870.00px;font-size:11.6px;letter-spacing:0.652px;-webkit-text-stroke:.4px #2a3547;">65%</div>
<div class="t" style="left:1821.70px;top:886.90px;font-size:9.8px;letter-spacing:0.441px;">Oct</div>
</body>
</html>
